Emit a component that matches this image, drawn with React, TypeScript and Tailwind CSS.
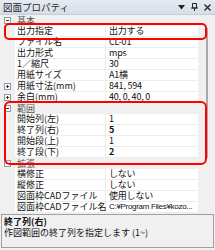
import React from 'react';

type Row =
  | { kind: 'cat'; label: string }
  | { kind: 'prop'; name: string; value: string; bold?: boolean; expand?: boolean; narrow?: boolean };

const ROWS: Row[] = [
  { kind: 'cat', label: '基本' },
  { kind: 'prop', name: '出力指定', value: '出力する' },
  { kind: 'prop', name: 'ファイル名', value: 'CL-01' },
  { kind: 'prop', name: '出力形式', value: 'mps' },
  { kind: 'prop', name: '1／縮尺', value: '30' },
  { kind: 'prop', name: '用紙サイズ', value: 'A1横' },
  { kind: 'prop', name: '用紙寸法(mm)', value: '841, 594', expand: true },
  { kind: 'prop', name: '余白(mm)', value: '40, 0, 40, 0', expand: true },
  { kind: 'cat', label: '範囲' },
  { kind: 'prop', name: '開始列(左)', value: '1' },
  { kind: 'prop', name: '終了列(右)', value: '5', bold: true },
  { kind: 'prop', name: '開始段(上)', value: '1' },
  { kind: 'prop', name: '終了段(下)', value: '2', bold: true },
  { kind: 'cat', label: '拡張' },
  { kind: 'prop', name: '横修正', value: 'しない' },
  { kind: 'prop', name: '縦修正', value: 'しない' },
  { kind: 'prop', name: '図面枠CADファイル', value: '使用しない' },
  { kind: 'prop', name: '図面枠CADファイル名', value: 'C:¥Program Files¥kozo...', narrow: true },
];

function ToggleBox({ open }: { open: boolean }) {
  return (
    <svg width="7" height="7" viewBox="0 0 7 7" className="block">
      <rect x="0.5" y="0.5" width="6" height="6" fill="#fff" stroke="#8e9aa8" />
      <line x1="2" y1="3.5" x2="5" y2="3.5" stroke="#333" />
      {!open && <line x1="3.5" y1="2" x2="3.5" y2="5" stroke="#333" />}
    </svg>
  );
}

function GridRow({ row }: { row: Row }) {
  if (row.kind === 'cat') {
    return (
      <div className="flex h-[11px] items-center bg-[#f0f0f0]">
        <div className="flex w-[15px] shrink-0 justify-center">
          <ToggleBox open />
        </div>
        <span className="pl-[2px] leading-[10px] text-[#555]">{row.label}</span>
      </div>
    );
  }
  return (
    <div className="flex h-[11px]">
      <div className="flex w-[15px] shrink-0 items-center justify-center bg-[#f0f0f0]">
        {row.expand && <ToggleBox open={false} />}
      </div>
      <div className="flex w-[91px] shrink-0 items-center whitespace-nowrap border-b border-r border-[#ededed] bg-white pl-[2px] leading-[10px]">
        {row.name}
      </div>
      <div
        className={[
          'flex min-w-0 flex-1 items-center whitespace-nowrap border-b border-[#ededed] bg-white pl-[3px] leading-[10px]',
          row.bold ? 'font-bold' : '',
          row.narrow
            ? "overflow-hidden font-['Liberation_Sans',sans-serif] text-[8px] tracking-[-0.3px]"
            : 'tracking-[-0.2px]',
        ].join(' ')}
      >
        {row.value}
      </div>
    </div>
  );
}

export default function App() {
  return (
    <div className="relative h-[250px] w-[215px] overflow-hidden bg-[#f0f0f0] font-['Noto_Sans_CJK_JP',sans-serif] text-[9px] text-[#111]">
      {/* title bar */}
      <div className="flex h-[15px] items-center justify-between border-b border-[#c5cdd8] bg-gradient-to-b from-[#e6ebf2] to-[#d6dde8] pl-[3px] pr-[4px]">
        <span className="text-[9.5px] leading-[12px] text-[#1e1e1e]">図面プロパティ</span>
        <div className="flex items-center gap-[6px]">
          <svg width="7" height="5" viewBox="0 0 7 5">
            <path d="M0 0H7L3.5 4.5Z" fill="#222" />
          </svg>
          <svg width="7" height="8" viewBox="0 0 7 8">
            <path d="M1.5 0.5H5.5V5H1.5Z M0 5H7 M3.5 5V8" fill="none" stroke="#222" />
          </svg>
          <svg width="7" height="7" viewBox="0 0 7 7">
            <path d="M0.5 0.5L6.5 6.5M6.5 0.5L0.5 6.5" stroke="#222" strokeWidth="1.3" />
          </svg>
        </div>
      </div>

      {/* property grid */}
      <div className="flex h-[198px]">
        <div className="w-[198px] shrink-0 overflow-hidden bg-white">
          {ROWS.map((row, i) => (
            <GridRow key={i} row={row} />
          ))}
        </div>
        <div className="flex flex-1 justify-center bg-[#f0f0f0] pt-[13px]">
          <div className="h-[130px] w-[2px] bg-[#a8a8a8]" />
        </div>
      </div>

      {/* description */}
      <div className="mx-[1px] mt-[1px] h-[34px] border border-[#a0a0a0] bg-[#f0f0f0] px-[2px] pt-[1px]">
        <div className="font-bold leading-[11px]">終了列(右)</div>
        <div className="leading-[11px]">作図範囲の終了列を指定します (1~)</div>
      </div>

      {/* annotation boxes */}
      <div className="pointer-events-none absolute left-[4px] top-[23px] h-[17px] w-[203px] rounded-[5px] border-2 border-[#ff0000]" />
      <div className="pointer-events-none absolute left-[4px] top-[101px] h-[64px] w-[203px] rounded-[6px] border-2 border-[#ff0000]" />
    </div>
  );
}
